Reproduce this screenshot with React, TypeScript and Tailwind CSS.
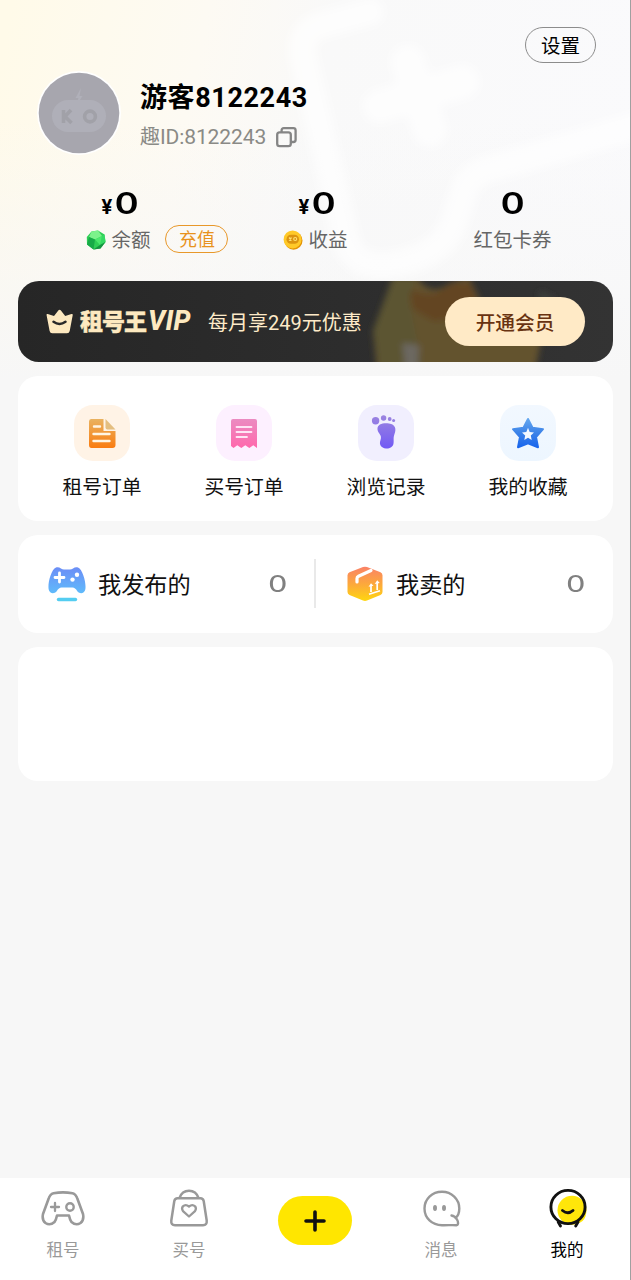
import type { ReactNode } from "react";

const HeaderBackground = () => (
  <svg className="absolute left-0 top-0" width="631" height="400" viewBox="0 0 631 400" fill="none">
    <defs>
      <linearGradient id="hdr" x1="0" y1="60" x2="631" y2="190" gradientUnits="userSpaceOnUse">
        <stop offset="0" stopColor="#fffae9" />
        <stop offset="0.3" stopColor="#fdfaf3" />
        <stop offset="0.5" stopColor="#f9f9f9" />
        <stop offset="1" stopColor="#fafafc" />
      </linearGradient>
      <linearGradient id="hdrFade" x1="0" y1="120" x2="0" y2="380" gradientUnits="userSpaceOnUse">
        <stop offset="0" stopColor="#f7f7f7" stopOpacity="0" />
        <stop offset="1" stopColor="#f7f7f7" />
      </linearGradient>
      <filter id="soft" x="-20%" y="-20%" width="140%" height="140%">
        <feGaussianBlur stdDeviation="4" />
      </filter>
    </defs>
    <rect width="631" height="400" fill="url(#hdr)" />
    <rect width="631" height="400" fill="url(#hdrFade)" />
    <g filter="url(#soft)" stroke="#fff" strokeOpacity="0.65" strokeLinejoin="round" strokeLinecap="round">
      <path d="M370 12 L318 26 Q298 34 304 60 L346 240 Q356 272 396 264 Q444 254 454 222 L466 186 Q470 176 486 170 L650 122" strokeWidth="27" />
      <path d="M408 62 L430 130 M380 106 L462 82" strokeWidth="34" />
    </g>
  </svg>
);

const CopyIcon = () => (
  <svg width="21" height="21" viewBox="0 0 21 21" fill="none" stroke="#858585" strokeWidth="2.300">
    <rect x="1.200" y="5.400" width="13.600" height="13.800" rx="2.400" />
    <path d="M5.600 5V3.300Q5.600 1.200 7.800 1.200H17.400Q19.600 1.200 19.600 3.400V12.800Q19.600 15 17.400 15H15" />
  </svg>
);

const Avatar = () => (
  <svg width="84" height="84" viewBox="0 0 84 84">
    <circle cx="42" cy="42" r="42" fill="#fff" />
    <circle cx="42" cy="42" r="40.300" fill="#a7a6ae" />
    <path d="M44 17 L38.500 27 H41.500 L39 35 L45.500 25 H42.500 Z" fill="#b0b0b9" />
    <rect x="15" y="29" width="54" height="32" rx="16" fill="#afafb8" />
    <g stroke="#a1a1a8" strokeWidth="3.600" fill="none">
      <path d="M26.500 39v13M34 39l-6 6.500 6.500 6.500" />
      <circle cx="53" cy="45.500" r="5.400" />
    </g>
  </svg>
);

const GemIcon = () => (
  <svg width="20" height="20" viewBox="0 0 20 20">
    <path d="M5.500 1.500 L12 .5 L18.500 4.500 L19.500 12 L14.500 18.500 L7.500 19.500 L1 14.500 L.8 7 Z" fill="#2fce55" />
    <path d="M5.500 1.500 L12 .5 L16 6 L9 9.500 L3 7 Z" fill="#7cf28b" />
    <path d="M16 6 L18.500 4.500 L19.500 12 L14 15 Z" fill="#35d963" />
    <path d="M3 7 L9 9.500 L7.500 19.500 L1 14.500 Z" fill="#17aa47" />
    <path d="M9 9.500 L16 6 L14 15 Z" fill="#4be86c" />
    <path d="M7.500 19.500 L14 15 L19.500 12 L14.500 18.500Z" fill="#149441" />
  </svg>
);

const CoinIcon = () => (
  <svg width="20" height="20" viewBox="0 0 20 20" fill="none">
    <circle cx="10.500" cy="10.700" r="9" fill="#e49405" />
    <circle cx="9.600" cy="9.400" r="9" fill="#ffc928" />
    <rect x="3.500" y="4.800" width="12.500" height="9" rx="4.500" fill="#dc9410" />
    <path d="M6 7.500l2.500 3M8.500 7.500L6 10.500" stroke="#ffe172" strokeWidth="1.200" />
    <circle cx="12.200" cy="9" r="1.500" stroke="#ffe172" strokeWidth="1.100" />
  </svg>
);

const CrownIcon = () => (
  <svg width="28" height="26" viewBox="0 0 28 26" fill="none">
    <path d="M.6 6.200 Q.2 4.700 1.700 5 L8 7 L12.500 1.200 Q13.600 .2 14.700 1.200 L19.200 7 L25.500 5 Q27.100 4.700 26.700 6.300 L23.700 22 Q23.200 24.300 21 24.300 H6.300 Q4.100 24.300 3.600 22 Z" fill="#fde9c0" />
    <path d="M7.500 12.800 Q13.500 17.200 19.500 12.800" stroke="#292929" strokeWidth="2.500" strokeLinecap="round" />
  </svg>
);

const BannerArt = () => (
  <svg className="absolute right-0 top-0" width="270" height="82" viewBox="0 0 270 82">
    <defs>
      <filter id="artBlur" x="-20%" y="-20%" width="140%" height="140%">
        <feGaussianBlur stdDeviation="3" />
      </filter>
    </defs>
    <g filter="url(#artBlur)">
      <path d="M50 -4 L30 50 L34 90 L192 90 L200 50 L138 22 L126 -4 L107 2 Q87 17 74 -4 Z" fill="#64532f" />
      <path d="M66 6 Q87 22 107 3 L128 2 L138 33 L91 40 L70 28 Z" fill="#634522" />
      <path d="M50 -4 L30 50 L38 90 L80 90 L66 18 L74 -4 Z" fill="#5c5431" />
      <path d="M59 62 L76 64 L75 88 L62 88 Z" fill="#6c6861" />
      <path d="M196 13 L210 20" stroke="#3d403d" strokeWidth="7" />
    </g>
  </svg>
);

const OrderIcon = () => (
  <svg width="56" height="56" viewBox="0 0 56 56" fill="none">
    <defs>
      <linearGradient id="org" x1="0" y1="14" x2="0" y2="43" gradientUnits="userSpaceOnUse">
        <stop stopColor="#e9b260" />
        <stop offset="1" stopColor="#fa7c10" />
      </linearGradient>
    </defs>
    <rect width="56" height="56" rx="19" fill="#fff3e6" />
    <path d="M17 14 H29.500 V26 H41.500 V40 Q41.500 43 38.500 43 H17.500 Q15 43 15 40 V16.500 Q15 14 17 14 Z" fill="url(#org)" />
    <path d="M31.500 14 L41.500 24.500 H33.500 Q31.500 24.500 31.500 22.500 Z" fill="#e4be80" />
    <path d="M20 21.500H26M19.500 29H35.500M19.500 36H35.500" stroke="#fff5e4" strokeWidth="2.400" strokeLinecap="round" />
  </svg>
);

const ReceiptIcon = () => (
  <svg width="56" height="56" viewBox="0 0 56 56" fill="none">
    <defs>
      <linearGradient id="pnk" x1="0" y1="14" x2="0" y2="43" gradientUnits="userSpaceOnUse">
        <stop stopColor="#eb8bc1" />
        <stop offset="1" stopColor="#ff68ac" />
      </linearGradient>
    </defs>
    <rect width="56" height="56" rx="19" fill="#fdf0ff" />
    <path d="M17 14H39Q41 14 41 16V43L37.300 40.200L33.300 43L29.300 40.200L25.300 43L21.300 40.200L17.500 43L15 41V16Q15 14 17 14Z" fill="url(#pnk)" />
    <path d="M20.500 22H35.500M20.500 27H35.500M20.500 32H31" stroke="#ffe4f5" strokeWidth="1.800" strokeLinecap="round" />
  </svg>
);

const FootIcon = () => (
  <svg width="56" height="56" viewBox="0 0 56 56">
    <defs>
      <linearGradient id="prp" x1="0" y1="11" x2="0" y2="44" gradientUnits="userSpaceOnUse">
        <stop stopColor="#9b84e0" />
        <stop offset="1" stopColor="#7159f5" />
      </linearGradient>
    </defs>
    <rect width="56" height="56" rx="19" fill="#f1effe" />
    <g fill="url(#prp)">
      <path d="M19.500 24.500C19 18.500 26 17.800 31 18.500C37.500 19.500 38.500 24 36.500 29C35 33 36 35 35.500 38.500C35 42 31.500 43.800 28 43.500C23 43 20.800 39.500 22.500 35C24.500 29.500 20 29 19.500 24.500Z" />
      <circle cx="17.600" cy="15.700" r="3.700" />
      <circle cx="25.600" cy="13" r="2.700" />
      <circle cx="31.700" cy="14" r="1.900" />
      <circle cx="35.600" cy="15.500" r="1.500" />
    </g>
  </svg>
);

const StarIcon = () => (
  <svg width="56" height="56" viewBox="0 0 56 56">
    <defs>
      <linearGradient id="blu" x1="0" y1="13" x2="0" y2="43" gradientUnits="userSpaceOnUse">
        <stop stopColor="#66a9f0" />
        <stop offset="0.5" stopColor="#3b82e8" />
        <stop offset="1" stopColor="#1764ed" />
      </linearGradient>
      <linearGradient id="bluBg" x1="0" y1="0" x2="0" y2="1">
        <stop stopColor="#f2f8ff" />
        <stop offset="1" stopColor="#edf6ff" />
      </linearGradient>
    </defs>
    <rect width="56" height="56" rx="19" fill="url(#bluBg)" />
    <path d="M28 14L32.500 22.700L43 24.200L36 32L38 42.200L28 38.200L18 42.200L20 32L13 24.200L23.500 22.700Z" fill="url(#blu)" stroke="url(#blu)" strokeWidth="2" strokeLinejoin="round" />
    <path d="M28 22.800L29.700 27L34 27.500L30.800 30.400L31.700 34.900L28 32.800L24.300 34.900L25.200 30.400L22 27.500L26.300 27Z" fill="#f4f9ff" />
  </svg>
);

const PadIcon = () => (
  <svg width="38" height="36" viewBox="0 0 38 36" fill="none">
    <defs>
      <linearGradient id="pad" x1="0" y1="0" x2="0" y2="28" gradientUnits="userSpaceOnUse">
        <stop stopColor="#6c8bf6" />
        <stop offset="1" stopColor="#5fbcfb" />
      </linearGradient>
    </defs>
    <path d="M8 1.500C11.500 .3 13.500 3.500 16 3.500H22C24.500 3.500 26.500 .3 30 1.500C35 3.500 38.500 18 37.300 23.500C36.500 27.500 32 28.300 29.500 25.500C27.500 22.500 26.500 21.500 24.500 21.500H13.500C11.500 21.500 10.500 22.500 8.500 25.500C6 28.300 1.500 27.500 .7 23.500C-.5 18 3 3.500 8 1.500Z" fill="url(#pad)" />
    <path d="M11.500 7V16M7 11.500H16" stroke="#fff" strokeWidth="2.800" strokeLinecap="round" />
    <circle cx="29" cy="8.800" r="2.200" fill="#fff" />
    <circle cx="24.500" cy="13.600" r="2.200" fill="#fff" />
    <path d="M10.500 33.500H27.500" stroke="#54cdf1" strokeWidth="3.400" strokeLinecap="round" />
  </svg>
);

const BoxIcon = () => (
  <svg width="38" height="36" viewBox="0 0 38 36" fill="none">
    <defs>
      <linearGradient id="box" x1="0" y1="0" x2="0" y2="36" gradientUnits="userSpaceOnUse">
        <stop stopColor="#fa8069" />
        <stop offset="0.500" stopColor="#fca83c" />
        <stop offset="1" stopColor="#ffd90c" />
      </linearGradient>
    </defs>
    <path d="M17 1Q19 .3 21 1L34.500 6.300Q36.500 7.300 36.500 9.500V26Q36.500 28 34.500 29L21 34.500Q19 35.300 17 34.500L3.500 29Q1.500 28 1.500 26V9.500Q1.500 7.300 3.500 6.300Z" fill="url(#box)" />
    <path d="M25 4.500L12.500 10.300Q11 11 11 12.500V16" stroke="#fff" strokeWidth="3.200" strokeLinecap="round" />
    <path d="M23 28.300L34 24.800M25 26V19.500M31.200 24V16.500" stroke="#fff" strokeWidth="1.700" />
    <path d="M22.500 20.800L25 17.300L27.500 19.800ZM28.700 18L31.200 14.300L33.700 17Z" fill="#fff" />
  </svg>
);

const NavPadIcon = () => (
  <svg width="44" height="42" viewBox="0 0 44 42" fill="none" stroke="#999" strokeWidth="2.600" strokeLinejoin="round" strokeLinecap="round">
    <path d="M12.500 5.200Q22 3.500 31.500 5.200Q35 6 36.500 11L42 26Q43.300 32 39.500 35Q35 38 30.500 34Q28.800 31.500 28 27.500H16Q15.200 31.500 13.500 34Q9 38 4.500 35Q.7 32 2 26L7.500 11Q9 6 12.500 5.200Z" />
    <path d="M14 15V23M10 19H18" strokeWidth="2.300" />
    <circle cx="29" cy="19" r="3.700" strokeWidth="2.400" />
  </svg>
);

const NavBagIcon = () => (
  <svg width="44" height="42" viewBox="0 0 44 42" fill="none" stroke="#999" strokeWidth="2.500" strokeLinejoin="round">
    <path d="M10.500 10.200H33.500Q36 10.200 36.700 13L39.700 32.500Q40.200 37.300 36 37.300H8Q3.800 37.300 4.300 32.500L7.300 13Q8 10.200 10.500 10.200Z" />
    <path d="M12.500 10Q15 2.800 22 2.800T31.500 10" />
    <path d="M22 28.500L16 23.100Q14.200 20.500 15.900 18.300Q18.700 15.800 22 18.500Q25.300 15.800 28.100 18.300Q29.800 20.500 28 23.100Z" strokeWidth="2.300" />
  </svg>
);

const NavChatIcon = () => (
  <svg width="44" height="42" viewBox="0 0 44 42" fill="none" className="translate-x-px">
    <path d="M31.500 27.500Q35 28 37 31.500C38.500 34 38.500 37.200 36.500 37.200C32 36.900 28 37.300 22 37.200C12 37.200 4.500 30 4.500 20.500C4.500 11 12 3.800 22 3.800C31.500 3.800 39.300 11 39.300 20.500C39.300 25 38 28 35.500 30" stroke="#999" strokeWidth="2.400" strokeLinecap="round" strokeLinejoin="round" />
    <ellipse cx="15" cy="20" rx="2" ry="2.900" fill="#999" />
    <ellipse cx="24" cy="20" rx="2" ry="2.900" fill="#999" />
  </svg>
);

const NavMeIcon = () => (
  <svg width="44" height="42" viewBox="0 0 44 42" fill="none" strokeLinecap="round" className="translate-x-px">
    <circle cx="26" cy="22.200" r="14.500" fill="#ffe60a" />
    <path d="M30 35Q37 36 40 27" fill="#ffe60a" />
    <ellipse cx="22" cy="19" rx="17.100" ry="16.600" stroke="#111" strokeWidth="2.900" />
    <path d="M16.500 22.500Q22 27 27 22.500" stroke="#111" strokeWidth="2.900" />
    <path d="M12.200 34L14.500 38M32 34L29.700 38" stroke="#111" strokeWidth="2.900" />
  </svg>
);

// wide zero used by all of the counters
const Zero = ({ className }: { className: string }) => (
  <span className={`inline-block scale-x-[1.28] font-['Lato'] ${className}`}>0</span>
);

const stats = [
  { id: 1, label: "余额", currency: true, icon: <GemIcon />, action: "充值" },
  { id: 2, label: "收益", currency: true, icon: <CoinIcon /> },
  { id: 3, label: "红包卡券" },
];

const shortcuts = [
  { label: "租号订单", icon: <OrderIcon /> },
  { label: "买号订单", icon: <ReceiptIcon /> },
  { label: "浏览记录", icon: <FootIcon /> },
  { label: "我的收藏", icon: <StarIcon /> },
];

const NavItem = ({ icon, label, active }: { icon: ReactNode; label: string; active?: boolean }) => (
  <div className="flex flex-1 flex-col items-center pt-[10px]">
    {icon}
    <span className={`mt-[9px] text-[16.500px] leading-6 ${active ? "text-black" : "text-[#999]"}`}>{label}</span>
  </div>
);

const ListEntry = ({ icon, label }: { icon: ReactNode; label: string }) => (
  <div className="flex flex-1 items-center pl-[30px] pr-[30px]">
    {icon}
    <span className="ml-[12px] flex-1 pt-px text-[23.200px] leading-8 text-[#111]">{label}</span>
    <Zero className="text-[23.500px] font-medium text-[#808080]" />
  </div>
);

const App = () => {
  return (
    <div className="relative flex h-[1280px] w-[631px] flex-col overflow-hidden border-r border-[#a0a0a0] bg-[#f7f7f7] font-['Roboto','Noto_Sans_CJK_SC',sans-serif] text-black">
      <HeaderBackground />

      <header className="relative h-[281px] pt-[27px]">
        <div className="flex justify-end pr-[34px]">
          <button className="h-9 w-[71px] rounded-full border border-[#8c8c8c] pt-[3px] text-[19.500px] leading-none">设置</button>
        </div>
        <div className="flex items-start pl-[37px] pt-2">
          <Avatar />
          <div className="ml-[19px] pt-[9px]">
            <h1 className="text-[27px] font-bold leading-[36px] tracking-[0.600px]">游客8122243</h1>
            <div className="mt-[7px] flex items-center gap-[10px] text-[#8a8a86]">
              <span className="text-[21px] leading-7 tracking-[-0.100px]"><span className="text-[20px]">趣</span>ID:8122243</span>
              <CopyIcon />
            </div>
          </div>
        </div>

        <div className="mx-[20px] mt-[29px] grid w-[591px] grid-cols-3">
          {stats.map(({ id, label, currency, icon, action }) => (
            <div key={id} className="flex flex-col items-center">
              <div className="flex h-9 items-baseline gap-[6px] leading-9">
                {currency && <span className="text-[20px] font-bold">¥</span>}
                <Zero className="text-[30px] font-bold" />
              </div>
              <div className="relative mt-[5px] flex items-center gap-[5px] leading-7">
                {icon}
                <span className="pt-[2px] text-[19.500px] text-[#666]">{label}</span>
                {action && (
                  <span className="absolute left-[79px] top-0 flex h-7 w-[63px] items-center justify-center rounded-full border border-[#e8982a] pt-px text-[18px] text-[#e8921c]">
                    {action}
                  </span>
                )}
              </div>
            </div>
          ))}
        </div>
      </header>

      <main className="relative flex flex-1 flex-col pl-[18px] pr-[17px]">
        <section className="relative flex h-[81px] items-center overflow-hidden rounded-[21px] bg-linear-to-r from-[#262626] to-[#333] pl-[28px] pr-[28px]">
          <BannerArt />
          <CrownIcon />
          <span className="relative ml-[6px] inline-flex w-[111px] items-center whitespace-nowrap pb-[2px] font-['Noto_Sans_CJK_SC'] text-[23px] font-black leading-none text-[#fde9c0]">
            <span className="tracking-[-1px] [-webkit-text-stroke:0.400px_#fde9c0]">租号王</span>
            <span className="ml-[2px] inline-block pt-px font-['Roboto'] text-[27px] font-extrabold italic tracking-[0.300px]">VIP</span>
          </span>
          <span className="ml-[17px] pt-[3px] text-[20px] text-[#fdeac8]">每月享249元优惠</span>
          <button className="relative ml-auto h-[49px] w-[140px] rounded-full bg-[#ffeac6] pt-[4px] text-[19.700px] font-medium text-[#693311]">开通会员</button>
        </section>

        <section className="mt-[14px] flex h-[145px] rounded-[20px] bg-white pl-[13px] pr-[14px] pt-[29px]">
          {shortcuts.map(({ label, icon }) => (
            <div key={label} className="flex flex-1 flex-col items-center">
              {icon}
              <span className="mt-[13px] text-[19.800px] leading-7 text-[#111]">{label}</span>
            </div>
          ))}
        </section>

        <section className="mt-[14px] flex h-[98px] items-center rounded-[20px] bg-white">
          <ListEntry icon={<PadIcon />} label="我发布的" />
          <div className="-ml-px mb-px h-[49px] w-[2px] bg-[#e9e9e9]" />
          <ListEntry icon={<BoxIcon />} label="我卖的" />
        </section>

        <section className="mt-[14px] h-[134px] rounded-[20px] bg-white" />
      </main>

      <nav className="relative flex h-[102px] bg-white">
        <NavItem icon={<NavPadIcon />} label="租号" />
        <NavItem icon={<NavBagIcon />} label="买号" />
        <div className="flex flex-1 justify-center pt-[18px]">
          <button className="flex h-[49px] w-[74px] items-center justify-center rounded-full bg-[#ffe600]">
            <svg width="22" height="22" viewBox="0 0 22 22" stroke="#111" strokeWidth="3.600" strokeLinecap="round">
              <path d="M11 2V20M2 11H20" />
            </svg>
          </button>
        </div>
        <NavItem icon={<NavChatIcon />} label="消息" />
        <NavItem icon={<NavMeIcon />} label="我的" active />
      </nav>
    </div>
  );
};

export default App;
